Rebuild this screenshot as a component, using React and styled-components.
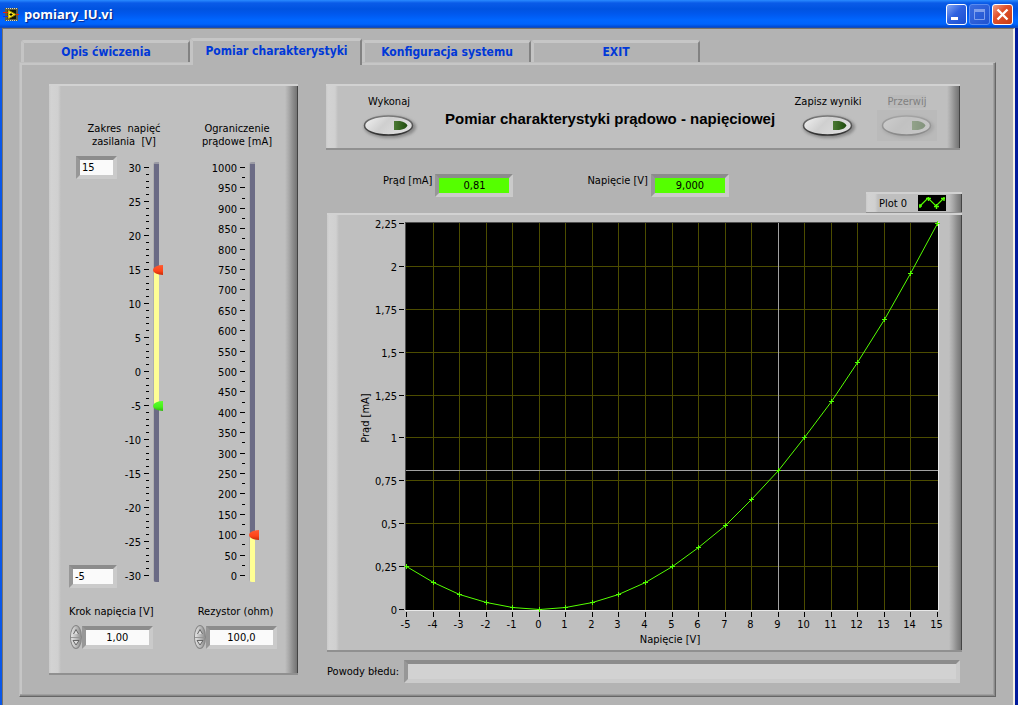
import { useId, useState } from "react";
import styled, { createGlobalStyle } from "styled-components";

const GlobalStyle = createGlobalStyle`
  * {
    box-sizing: border-box;
  }
  body {
    margin: 0;
    background: #b3b3b3;
  }
  body,
  button,
  input {
    font-family: "DejaVu Sans Condensed", "DejaVu Sans", sans-serif;
    font-size: 11px;
    line-height: 13px;
    color: #000;
  }
  button {
    padding: 0;
    border: none;
    background: none;
  }
`;

const Window = styled.div`
  display: flex;
  flex-direction: column;
  min-height: 100vh;
  padding: 0 3px 0 2px;
  background: linear-gradient(to right, #0a57e8 2px, #0030c8 50%, #001a9c);
`;

const TitleBar = styled.header`
  display: flex;
  align-items: center;
  gap: 5px;
  height: 28px;
  margin: 0 -3px 0 -2px;
  padding: 0 5px 0 3px;
  background: linear-gradient(
    #2a8bff 0,
    #0a5be8 3px,
    #0053e0 9px,
    #0058ee 14px,
    #0066ff 20px,
    #0064fc 24px,
    #0048d0 27px,
    #2a52a0 28px
  );
`;

const WindowTitle = styled.h1`
  flex: 1;
  margin: 0;
  font-family: "Open Sans", "Noto Sans", sans-serif;
  font-size: 13px;
  font-weight: bold;
  line-height: 20px;
  color: #fff;
  text-shadow: 1px 1px 1px #0a1e80;
`;

const WindowButtons = styled.div`
  display: flex;
  gap: 2px;
`;

const WindowButton = styled.button`
  width: 21px;
  height: 21px;
  border: 1px solid ${(p) => (p.$kind === "max" ? "#5b8cf0" : "#fff")};
  border-radius: 3px;
  background: ${(p) =>
    p.$kind === "close"
      ? "linear-gradient(135deg, #f0a088, #e0512c 40%, #c83c14)"
      : p.$kind === "max"
      ? "linear-gradient(135deg, #3a6ce0, #1f52d0)"
      : "linear-gradient(135deg, #86a8f4, #2f62e0 45%, #1c4fd0)"};

  svg {
    display: block;
  }
`;

const Client = styled.main`
  flex: 1;
  padding: 9px 17px 8px 16px;
  border-top: 1px solid #7a7468;
  border-left: 1px solid #7a7468;
  border-right: 2px solid #f0eee6;
  background: #b3b3b3;
`;

const TabList = styled.div`
  display: flex;
  align-items: flex-end;
  padding-left: 2px;
`;

const Tab = styled.button`
  position: relative;
  z-index: ${(p) => (p.$active ? 1 : 0)};
  width: ${(p) => (p.$active ? 172 : 169)}px;
  height: ${(p) => (p.$active ? 27 : 22)}px;
  margin-bottom: ${(p) => (p.$active ? -3 : 0)}px;
  padding-bottom: ${(p) => (p.$active ? 4 : 0)}px;
  border-top: 3px solid #c6c6c6;
  border-left: 3px solid #c4c4c4;
  border-right: 2px solid #828282;
  border-radius: 3px 3px 0 0;
  background: #b3b3b3;
  font-size: 12px;
  font-weight: bold;
  color: #0038d8;
`;

const TabPage = styled.section`
  display: grid;
  grid-template-columns: 249px minmax(0, 1fr);
  gap: 28px;
  padding: 21px 33px 13px 29px;
  border: 1px solid;
  border-color: #bebebe #666 #666 #bebebe;
  background: #b3b3b3;
  box-shadow: inset -1px -1px #8a8a8a, inset -2px -2px #a0a0a0,
    inset 2px 2px #c6c6c6;
`;

const Panel = styled.div`
  border-top: 2px solid #d2d2d2;
  border-bottom: 2px solid #909090;
  background: linear-gradient(
      to right,
      #cacaca 0,
      #d3d3d3 2px,
      #d0d0d0 9px,
      transparent 12px
    ),
    linear-gradient(
      to left,
      #444 1px,
      #747474 1px,
      #8c8c8c 5px,
      #a8a8a8 9px,
      transparent 13px
    ),
    #bfbfbf;
`;

const RangePanel = styled(Panel)`
  display: flex;
  align-items: flex-start;
  gap: 25px;
  margin-bottom: 8px;
  padding: 36px 18px 20px 20px;
`;

const Column = styled.div`
  display: flex;
  flex-direction: column;
  align-items: flex-start;
  width: ${(p) => p.$width}px;
`;

const Heading = styled.h2`
  align-self: ${(p) => p.$align};
  width: 90px;
  margin: 0 0 8px;
  font-size: 11px;
  font-weight: normal;
  text-align: center;
  white-space: pre;
`;

const RangeRow = styled.div`
  display: flex;
  align-items: center;
  height: 432px;
`;

const RangeInputs = styled.div`
  display: flex;
  flex-direction: column;
  align-items: flex-end;
  align-self: stretch;
  justify-content: space-between;
  width: 48px;
`;

const NumberInput = styled.input`
  width: ${(p) => p.$width}px;
  height: 23px;
  padding: 0 2px;
  border: 4px solid;
  border-color: #8c8c8c #cacaca #cbcbcb #979797;
  outline: none;
  background: ${(p) => p.$fill || "#fafafa"};
  text-align: ${(p) => p.$align || "left"};
`;

const ScaleSvg = styled.svg`
  display: block;
`;

const Slot = styled.div`
  display: grid;
  width: 11px;
  height: 420px;
  margin-left: 3px;
  border-radius: 3px;
  background-repeat: no-repeat;
  background-size: 6px 100%;
`;

const SlotInput = styled.input`
  grid-area: 1 / 1;
  width: 11px;
  height: 418px;
  margin: 1px 0;
  writing-mode: vertical-lr;
  direction: rtl;
  appearance: none;
  background: transparent;
  pointer-events: none;

  &::-webkit-slider-runnable-track {
    width: 11px;
    background: transparent;
  }
  &::-webkit-slider-thumb {
    width: 10px;
    height: 10px;
    appearance: none;
    border-radius: 10px 0 0 10px / 5px 0 0 5px;
    background: ${(p) =>
      p.$tone === "green"
        ? "linear-gradient(#5cff2c, #48f01c 60%, #2fb80c)"
        : "linear-gradient(#ff5a30, #ff4418 60%, #c42c08)"};
    pointer-events: auto;
  }
`;

const Field = styled.div`
  display: flex;
  flex-direction: column;
  align-items: center;
  gap: 7px;
  margin-top: 17px;
  white-space: nowrap;
`;

const StepperRow = styled.div`
  display: flex;
  align-items: center;
`;

const StepperButtons = styled.div`
  display: flex;
  flex-direction: column;
  width: 12px;
  height: 24px;
  border: 1px solid #858585;
  border-radius: 50%;
  background: linear-gradient(to right, #e6e6e6, #b4b4b4 60%, #8c8c8c);
  overflow: hidden;

  button {
    flex: 1;
  }
  button + button {
    border-top: 1px solid #969696;
  }
  svg {
    display: block;
    margin: auto;
  }
`;

const Content = styled.div`
  display: flex;
  flex-direction: column;
`;

const HeaderPanel = styled(Panel)`
  display: flex;
  height: 66px;
  margin-right: 2px;
  padding: 9px 23px 0 33px;
`;

const PageTitle = styled.h2`
  flex: 1;
  margin: 15px 0 0 26px;
  font-family: "Liberation Sans", Arial, sans-serif;
  font-size: 15px;
  font-weight: bold;
  line-height: 18px;
  white-space: nowrap;
`;

const Toggle = styled.button`
  display: flex;
  flex-direction: column;
  align-items: center;
  gap: 2px;
  width: 60px;
  margin-left: ${(p) => (p.disabled ? 19 : 0)}px;
  color: ${(p) => (p.disabled ? "#808080" : "#000")};
  white-space: nowrap;

  span,
  svg {
    display: block;
    background: ${(p) => (p.disabled ? "#bababa" : "none")};
  }
`;

const ReadoutRow = styled.div`
  display: flex;
  height: 63px;
`;

const Readout = styled.div`
  display: flex;
  gap: 3px;
  margin-top: 24px;
  white-space: nowrap;
`;

const Readouts = styled.div`
  display: flex;
  flex: 1;
  gap: 74px;
  padding-left: 57px;
`;

const Legend = styled(Panel)`
  display: flex;
  align-items: center;
  align-self: flex-end;
  justify-content: space-between;
  width: 96px;
  height: 21px;
  padding: 0 16px 0 13px;
  border-bottom-width: 1px;
`;

const ChartPanel = styled(Panel)`
  margin-left: 1px;
  svg {
    display: block;
    width: 100%;
  }
`;

const ErrorRow = styled.div`
  display: flex;
  align-items: center;
  gap: 5px;
  margin: 8px 2px 0 1px;
  white-space: nowrap;

  input {
    flex: 1;
    min-width: 0;
  }
`;

const TABS = [
  "Opis ćwiczenia",
  "Pomiar charakterystyki",
  "Konfiguracja systemu",
  "EXIT",
];

const GREEN = "#55ff00";

function VerticalScale({ width, min, max, major, minor }) {
  const toY = (v) => Math.round(5 + ((max - v) / (max - min)) * 408) + 0.5;
  const ticks = [];
  for (let v = min; v <= max; v += minor) {
    ticks.push(v);
  }
  return (
    <ScaleSvg width={width} height="420" aria-hidden="true">
      {ticks.map((v) => (
        <g key={v}>
          <path
            d={`M${v % major === 0 ? width - 6 : width - 4} ${toY(v)}H${
              width - 1
            }`}
            stroke="#000"
          />
          {v % major === 0 && (
            <text x={width - 9} y={toY(v) + 4} textAnchor="end">
              {v}
            </text>
          )}
        </g>
      ))}
    </ScaleSvg>
  );
}

function slotBackground(from, to) {
  const a = (1 - to) * 408 + 6;
  const b = from === 0 ? 420 : (1 - from) * 408 + 6;
  return [
    "linear-gradient(to right, #b0b0b0 1px, transparent 1px)",
    `linear-gradient(#9a9aa4 2px, #6b6b85 2px, #6b6b85 ${a}px, #ffff94 ${a}px, #ffff94 ${b}px, #6b6b85 ${b}px)`,
  ].join(",");
}

function Stepper({ label, initial, width }) {
  const id = useId();
  const [value, setValue] = useState(initial);
  const text = value.toFixed(initial === 1 ? 2 : 1).replace(".", ",");
  return (
    <Field>
      <label htmlFor={id}>{label}</label>
      <StepperRow>
        <StepperButtons>
          <button aria-label="Więcej" onClick={() => setValue(value + 1)}>
            <svg width="8" height="7">
              <path d="M1.5 6L4 1.5L6.5 6" fill="#ddd" stroke="#666" />
            </svg>
          </button>
          <button aria-label="Mniej" onClick={() => setValue(value - 1)}>
            <svg width="8" height="7">
              <path d="M1 1.5H7L4 6Z" fill="#ddd" stroke="#666" />
            </svg>
          </button>
        </StepperButtons>
        <NumberInput id={id} $width={width} $align="center" value={text} readOnly />
      </StepperRow>
    </Field>
  );
}

function OvalToggle({ label, disabled }) {
  const id = useId();
  return (
    <Toggle disabled={disabled}>
      <span>{label}</span>
      <svg width="60" height="31" aria-hidden="true">
        <defs>
          <linearGradient id={`${id}-face`} x1="0" y1="0" x2="1" y2="0.4">
            <stop offset="0" stopColor="#f4f4f4" />
            <stop offset="0.5" stopColor="#cfcfcf" />
            <stop offset="1" stopColor="#dedede" />
          </linearGradient>
          <linearGradient id={`${id}-rim`} x1="0" y1="0" x2="0" y2="1">
            <stop offset="0" stopColor="#7a7a7a" />
            <stop offset="1" stopColor="#303030" />
          </linearGradient>
          <linearGradient id={`${id}-lamp`} x1="0" y1="0" x2="1" y2="0">
            <stop offset="0" stopColor="#4c7a35" />
            <stop offset="1" stopColor="#1d4a0c" />
          </linearGradient>
          <filter id={`${id}-soft`} x="-20%" y="-40%" width="140%" height="180%">
            <feGaussianBlur stdDeviation="1.5" />
          </filter>
        </defs>
        <g opacity={disabled ? 0.35 : 1}>
          <ellipse
            cx="31"
            cy="17"
            rx="26"
            ry="11"
            fill="#888"
            filter={`url(#${id}-soft)`}
          />
          <ellipse
            cx="29.5"
            cy="15.5"
            rx="24"
            ry="9.5"
            fill={`url(#${id}-face)`}
            stroke={`url(#${id}-rim)`}
            strokeWidth="1.5"
          />
          <path
            d="M35 11H41Q47 12 48.5 15.5Q47 19 41 20H35Z"
            fill={`url(#${id}-lamp)`}
          />
        </g>
      </svg>
    </Toggle>
  );
}

function NumberReadout({ label, value, width }) {
  const id = useId();
  return (
    <Readout>
      <label htmlFor={id}>{label}</label>
      <NumberInput
        id={id}
        $width={width}
        $fill={GREEN}
        $align="center"
        value={value}
        readOnly
      />
    </Readout>
  );
}

function Chart() {
  const toX = (v) => Math.round(79 + ((v + 5) / 20) * 531) + 0.5;
  const toY = (v) => Math.round(394 - (v / 2.25) * 386) + 0.5;
  const xs = Array.from({ length: 21 }, (_, i) => i - 5);
  const ys = Array.from({ length: 10 }, (_, i) => i * 0.25);
  const current = (v) => (v * v) / 100;

  return (
    <svg viewBox="0 0 635 435" role="img" aria-label="Prąd w funkcji napięcia">
      <rect x="78" y="7" width="533" height="389" fill="#505050" />
      <path d="M78 395.5H611.5V7" fill="none" stroke="#e8e8e8" />
      <rect x="79" y="8" width="532" height="387" fill="#000" />
      {xs.slice(1, -1).map((v) => (
        <path key={v} d={`M${toX(v)} 8V395`} stroke="#4c4c00" />
      ))}
      {ys.slice(1, -1).map((v) => (
        <path key={v} d={`M79 ${toY(v)}H611`} stroke="#4c4c00" />
      ))}
      <path d={`M${toX(9)} 8V395M79 ${toY(0.81)}H611`} stroke="#a0a0a0" />
      <polyline
        points={xs.map((v) => `${toX(v)},${toY(current(v))}`).join(" ")}
        fill="none"
        stroke={GREEN}
      />
      {xs.map((v) => (
        <path
          key={v}
          d={`M${toX(v) - 2.5} ${toY(current(v))}h5m-2.5 -2.5v5`}
          stroke={GREEN}
        />
      ))}
      {ys.map((v) => (
        <g key={v}>
          <path d={`M72 ${toY(v)}h5`} stroke="#000" />
          <text x="70" y={toY(v) + 4} textAnchor="end">
            {String(v).replace(".", ",")}
          </text>
        </g>
      ))}
      {xs.map((v) => (
        <g key={v}>
          <path d={`M${toX(v)} 397v5`} stroke="#000" />
          <text x={toX(v) - 1} y="413" textAnchor="middle">
            {v}
          </text>
        </g>
      ))}
      <text x="343" y="428" textAnchor="middle">
        Napięcie [V]
      </text>
      <text transform="translate(42 203) rotate(-90)" textAnchor="middle">
        Prąd [mA]
      </text>
    </svg>
  );
}

function AppIcon() {
  return (
    <svg width="16" height="15" aria-hidden="true">
      <rect x="2" y="1" width="13" height="13" fill="#5c5c44" />
      <path
        d="M3 1.5H15M3 13.5H15"
        stroke="#d8d8c0"
        strokeDasharray="1 1"
      />
      <rect x="4" y="3" width="9" height="9" fill="#101808" />
      <path d="M5 3L13 7.5L5 12Z" fill="#ffee20" stroke="#a08800" />
      <path d="M6.500 7.5H9.500M8 6V9" stroke="#000" />
      <path d="M0 5.5H5M13 7.5H16" stroke="#f02000" />
      <path d="M0 9.5H5" stroke="#0030ff" />
    </svg>
  );
}

export default function App() {
  const [tab, setTab] = useState(1);
  const [low, setLow] = useState(-5);
  const [high, setHigh] = useState(15);
  const [limit, setLimit] = useState(100);

  return (
    <Window>
      <GlobalStyle />
      <TitleBar>
        <AppIcon />
        <WindowTitle>pomiary_IU.vi</WindowTitle>
        <WindowButtons>
          <WindowButton $kind="min" aria-label="Minimalizuj">
            <svg width="19" height="19">
              <path d="M4 13.5H11" stroke="#fff" strokeWidth="3" />
            </svg>
          </WindowButton>
          <WindowButton $kind="max" aria-label="Maksymalizuj">
            <svg width="19" height="19">
              <path
                d="M4.5 5V14.5H14.5V5M4 5H15"
                fill="none"
                stroke="#7f9fec"
              />
              <path d="M4 5.5H15" stroke="#7f9fec" strokeWidth="3" />
            </svg>
          </WindowButton>
          <WindowButton $kind="close" aria-label="Zamknij">
            <svg width="19" height="19">
              <path
                d="M4.5 4.5L14.5 14.5M14.5 4.5L4.5 14.5"
                stroke="#fff"
                strokeWidth="2.4"
              />
            </svg>
          </WindowButton>
        </WindowButtons>
      </TitleBar>
      <Client>
        <TabList role="tablist">
          {TABS.map((name, i) => (
            <Tab
              key={name}
              role="tab"
              aria-selected={tab === i}
              $active={tab === i}
              onClick={() => setTab(i)}
            >
              {name}
            </Tab>
          ))}
        </TabList>
        <TabPage>
          <RangePanel>
            <Column $width={100}>
              <Heading $align="flex-end">
                {"Zakres  napięć\nzasilania  [V]"}
              </Heading>
              <RangeRow>
                <RangeInputs>
                  <NumberInput
                    $width={41}
                    aria-label="Napięcie maksymalne"
                    value={high}
                    onChange={(e) => setHigh(Number(e.target.value) || 0)}
                  />
                  <NumberInput
                    $width={48}
                    aria-label="Napięcie minimalne"
                    value={low}
                    onChange={(e) => setLow(Number(e.target.value) || 0)}
                  />
                </RangeInputs>
                <VerticalScale width={33} min={-30} max={30} major={5} minor={1} />
                <Slot
                  style={{
                    backgroundImage: slotBackground(
                      (low + 30) / 60,
                      (high + 30) / 60
                    ),
                  }}
                >
                  <SlotInput
                    type="range"
                    min="-30"
                    max="30"
                    value={high}
                    aria-label="Górny zakres napięcia"
                    onChange={(e) => setHigh(Number(e.target.value))}
                  />
                  <SlotInput
                    type="range"
                    $tone="green"
                    min="-30"
                    max="30"
                    value={low}
                    aria-label="Dolny zakres napięcia"
                    onChange={(e) => setLow(Number(e.target.value))}
                  />
                </Slot>
              </RangeRow>
              <Stepper label="Krok napięcia [V]" initial={1} width={71} />
            </Column>
            <Column $width={86}>
              <Heading $align="center">{"Ograniczenie\nprądowe [mA]"}</Heading>
              <RangeRow>
                <VerticalScale
                  width={52}
                  min={0}
                  max={1000}
                  major={50}
                  minor={25}
                />
                <Slot style={{ backgroundImage: slotBackground(0, limit / 1000) }}>
                  <SlotInput
                    type="range"
                    min="0"
                    max="1000"
                    value={limit}
                    aria-label="Ograniczenie prądowe [mA]"
                    onChange={(e) => setLimit(Number(e.target.value))}
                  />
                </Slot>
              </RangeRow>
              <Stepper label="Rezystor (ohm)" initial={100} width={71} />
            </Column>
          </RangePanel>
          <Content>
            <HeaderPanel>
              <OvalToggle label="Wykonaj" />
              <PageTitle>Pomiar charakterystyki prądowo - napięciowej</PageTitle>
              <OvalToggle label="Zapisz wyniki" />
              <OvalToggle label="Przerwij" disabled />
            </HeaderPanel>
            <ReadoutRow>
              <Readouts>
                <NumberReadout label="Prąd [mA]" value="0,81" width={78} />
                <NumberReadout label="Napięcie [V]" value="9,000" width={78} />
              </Readouts>
              <Legend>
                <span>Plot 0</span>
                <svg width="28" height="16" aria-hidden="true">
                  <rect width="28" height="16" fill="#000" />
                  <path
                    d="M2 11L10 3L18 11L26 3"
                    fill="none"
                    stroke={GREEN}
                    strokeWidth="1.2"
                  />
                  <path
                    d="M2 9v4M1 11h3M8 3.500h5M10.500 2v4M16 11.500h5M18.500 9v5M23 3.500h4M26 2v4"
                    stroke={GREEN}
                    strokeWidth="1.4"
                  />
                </svg>
              </Legend>
            </ReadoutRow>
            <ChartPanel>
              <Chart />
            </ChartPanel>
            <ErrorRow>
              <label htmlFor="errors">Powody błedu:</label>
              <NumberInput id="errors" $fill="#d2d2d2" readOnly />
            </ErrorRow>
          </Content>
        </TabPage>
      </Client>
    </Window>
  );
}
